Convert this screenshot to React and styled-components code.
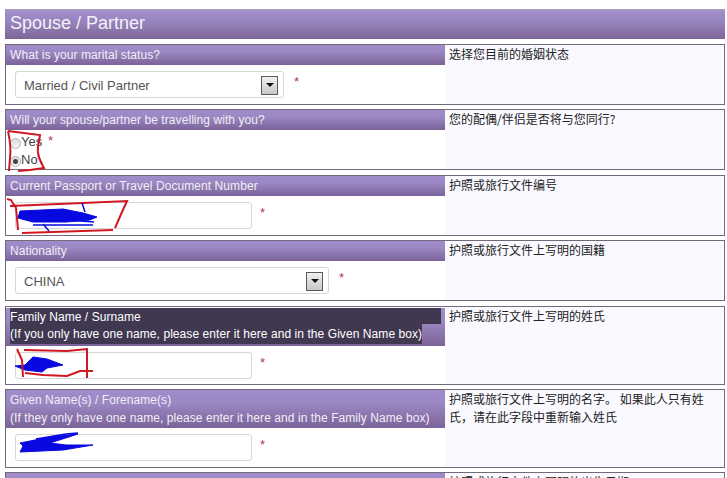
import React from "react";
import styled, { createGlobalStyle } from "styled-components";

const GlobalStyle = createGlobalStyle`
  html, body {
    margin: 0;
    height: 100%;
    overflow: hidden;
    background: #fff;
  }
`;

const Page = styled.div`
  padding: 9px 2px 0 5px;
  font-family: "Liberation Sans", "Noto Sans CJK SC", sans-serif;
  font-size: 12px;
  color: #333;
`;

const headerGradient = "linear-gradient(#a08ccb 0%, #9b87c2 35%, #7b6399 100%)";

const TitleBar = styled.h2`
  height: 30px;
  margin: 0 0 5px;
  padding-left: 5px;
  font-size: 18px;
  font-weight: normal;
  line-height: 29px;
  color: #f4f1f8;
  background: linear-gradient(#a8a0b8 0, #a08ccb 3px, #9683bb 45%, #7d6599 100%);
`;

const Form = styled.div`
  display: flex;
  flex-direction: column;
  gap: 4.4px;
`;

const Row = styled.section`
  position: relative;
  display: flex;
  flex: none;
  height: ${(props) => (props.$tall ? "79px" : "61px")};
  box-sizing: border-box;
  border: 1px solid #716a78;
`;

const Left = styled.div`
  width: 439px;
  flex: none;
  background: #fff;
`;

const Help = styled.div`
  flex: 1;
  padding: 0 14px 0 4px;
  font-family: "Noto Sans CJK SC", "Liberation Sans", sans-serif;
  font-size: 12px;
  line-height: 18px;
  color: #222;
  background: #f9f9ff;
`;

const Label = styled.div`
  box-sizing: border-box;
  padding: ${(props) => (props.$tall && !props.$selected ? "1px 4px 0" : "0 4px")};
  height: ${(props) => (props.$tall ? "38px" : "20px")};
  line-height: ${(props) => (props.$tall ? "18px" : "20px")};
  letter-spacing: 0.07px;
  color: #f1eef6;
  background: ${headerGradient};
`;

const Selected = styled.span`
  display: ${(props) => (props.$fit ? "table" : "block")};
  height: ${(props) => (props.$fit ? "20px" : "16px")};
  line-height: ${(props) => (props.$fit ? "20px" : "18px")};
  margin-top: ${(props) => (props.$fit ? "0" : "1px")};
  color: #fff;
  background: #403850;
`;

const Body = styled.div`
  display: flex;
  align-items: flex-start;
  padding: 6px 9px 0;
  gap: ${(props) => (props.$narrow ? "8px" : "10px")};
`;

const SelectBox = styled.div`
  display: flex;
  align-items: center;
  justify-content: space-between;
  box-sizing: border-box;
  width: ${(props) => props.$width}px;
  height: 27px;
  padding: 1px 5px 0 8px;
  font-size: 13px;
  color: #555;
  background: #fff;
  border: 1px solid #d6d6d6;
  border-radius: 3px;
`;

const ArrowButton = styled.span`
  display: flex;
  align-items: center;
  justify-content: center;
  box-sizing: border-box;
  width: 17px;
  height: 19px;
  background: linear-gradient(#f0f0f0, #c8c8c8);
  border: 1px solid #5a5a5a;
  &::after {
    content: "";
    border-style: solid;
    border-width: 4px 4px 0;
    border-color: #111 transparent transparent;
  }
`;

const TextInput = styled.div`
  box-sizing: border-box;
  width: 237px;
  height: 27px;
  background: #fff;
  border: 1px solid #d6d6d6;
  border-radius: 3px;
`;

const Star = styled.span`
  margin-top: 4px;
  font-size: 13px;
  line-height: 14px;
  color: #a8404f;
`;

const Radios = styled.div`
  position: relative;
  padding: 3px 0 0 4px;
  color: #444;
  font-size: 13px;
  line-height: 18px;
`;

const RadioLine = styled.label`
  display: flex;
  align-items: center;
`;

const RadioMark = styled.span`
  display: inline-flex;
  align-items: center;
  justify-content: center;
  box-sizing: border-box;
  width: 11px;
  height: 11px;
  margin: 3px 0 0;
  background: linear-gradient(#ddd, #f4f4f4);
  border: 1px solid #b5b5b5;
  border-radius: 50%;
  &::after {
    content: "";
    display: ${(props) => (props.$on ? "block" : "none")};
    width: 5px;
    height: 5px;
    background: #444;
    border-radius: 50%;
  }
`;

const RadioStar = styled.span`
  position: absolute;
  left: 42px;
  top: 2px;
  font-size: 13px;
  color: #a8404f;
`;

const Scribble = styled.svg`
  position: absolute;
  left: 0;
  top: 0;
  width: 100%;
  height: 100%;
  overflow: visible;
  pointer-events: none;
`;

const RedInk = styled.path`
  fill: none;
  stroke: #d01820;
  stroke-width: 2;
`;

const BlueBlob = styled.path`
  fill: #0808e0;
  stroke: #0808e0;
  stroke-width: 1;
`;

const BlueInk = styled.path`
  fill: none;
  stroke: #0808e0;
  stroke-width: 1.5;
`;

const rows = [
  {
    label: "What is your marital status?",
    help: "选择您目前的婚姻状态",
    select: "Married / Civil Partner",
    width: 269,
  },
  {
    label: "Will your spouse/partner be travelling with you?",
    help: "您的配偶/伴侣是否将与您同行?",
    radios: true,
    ink: <RedInk d="M2 21 L34 25 C33 32 31 38 32 43 C33 50 36 54 38 58 L24 60 L12 61 M2 21 C4 30 5 40 4 48 L3 61" />,
  },
  {
    label: "Current Passport or Travel Document Number",
    help: "护照或旅行文件编号",
    input: true,
    ink: (
      <>
        <RedInk d="M1 23 L5 24 L10 32 L11 42 L12 54 M4 30 L77 27 L121 25 L116 36 L109 52 M16 57 L107 54" />
        <BlueBlob d="M14 35 L57 33 L77 37 L91 41 L84 44 L60 46 L27 46 L12 42 Z" />
        <BlueInk d="M76 27 L79 36 M37 48 L43 55 M27 49 L87 49 M62 44 L88 46" />
      </>
    ),
  },
  { label: "Nationality", help: "护照或旅行文件上写明的国籍", select: "CHINA", width: 314 },
  {
    lines: ["Family Name / Surname", "(If you only have one name, please enter it here and in the Given Name box)"],
    selected: true,
    input: true,
    help: "护照或旅行文件上写明的姓氏",
    ink: (
      <>
        <BlueBlob d="M9 59 L19 58 L27 50 L41 52 L57 58 L41 61 L36 65 L19 63 Z" />
        <RedInk d="M11 42 L16 53 L17 70 M18 43 L61 44 L81 42 L81 71 M19 66 L37 68 L61 69 L74 64 L87 64" />
      </>
    ),
  },
  {
    lines: ["Given Name(s) / Forename(s)", "(If they only have one name, please enter it here and in the Family Name box)"],
    input: true,
    help: "护照或旅行文件上写明的名字。 如果此人只有姓氏\uFF0C请在此字段中重新输入姓氏",
    ink: (
      <>
        <BlueBlob d="M14 53 L44 47 L72 44 L44 53 L60 55 L87 55 L57 60 L14 62 L17 56 Z" />
        <BlueInk d="M30 49 L60 44 L72 43" />
      </>
    ),
  },
  { help: "护照或旅行文件上写明的出生日期" },
];

const App = () => {
  return (
    <Page>
      <GlobalStyle />
      <TitleBar>Spouse / Partner</TitleBar>
      <Form>
        {rows.map((row) => (
          <Row key={row.help} $tall={Boolean(row.lines)}>
            <Left>
              <Label $tall={Boolean(row.lines)} $selected={row.selected}>
                {row.label}
                {row.lines &&
                  (row.selected ? (
                    <>
                      <Selected>{row.lines[0]}</Selected>
                      <Selected $fit>{row.lines[1]}</Selected>
                    </>
                  ) : (
                    row.lines.map((line) => <div key={line}>{line}</div>)
                  ))}
              </Label>
              {row.select && (
                <Body>
                  <SelectBox $width={row.width}>
                    {row.select}
                    <ArrowButton />
                  </SelectBox>
                  <Star>*</Star>
                </Body>
              )}
              {row.radios && (
                <Radios>
                  <RadioLine>
                    <RadioMark />
                    Yes
                  </RadioLine>
                  <RadioLine>
                    <RadioMark $on />
                    No
                  </RadioLine>
                  <RadioStar>*</RadioStar>
                </Radios>
              )}
              {row.input && (
                <Body $narrow>
                  <TextInput />
                  <Star>*</Star>
                </Body>
              )}
            </Left>
            <Help>{row.help}</Help>
            {row.ink && <Scribble>{row.ink}</Scribble>}
          </Row>
        ))}
      </Form>
    </Page>
  );
};

export default App;
